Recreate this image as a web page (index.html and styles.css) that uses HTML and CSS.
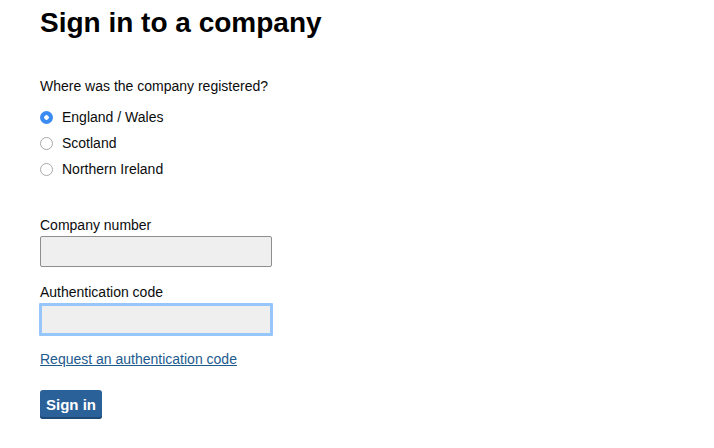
FILE: index.html
```html
<!DOCTYPE html>
<html lang="en">

<head>
    <meta charset="UTF-8">
    <meta name="viewport" content="width=device-width, initial-scale=1.0">
    <title>Sign in to a company</title>
    <link rel="stylesheet" href="styles.css">
</head>

<body>
    <main class="page">
        <h1>Sign in to a company</h1>
        <form class="signin-form">
            <fieldset class="jurisdiction">
                <legend>Where was the company registered?</legend>
                <label class="radio-row">
                    <input type="radio" name="jurisdiction" value="ew" checked>
                    <span>England / Wales</span>
                </label>
                <label class="radio-row">
                    <input type="radio" name="jurisdiction" value="sc">
                    <span>Scotland</span>
                </label>
                <label class="radio-row">
                    <input type="radio" name="jurisdiction" value="ni">
                    <span>Northern Ireland</span>
                </label>
            </fieldset>

            <div class="field field-first">
                <label for="company-number">Company number</label>
                <input class="text-input" type="text" id="company-number">
            </div>

            <div class="field">
                <label for="auth-code">Authentication code</label>
                <input class="text-input focused" type="text" id="auth-code">
            </div>

            <a class="request-link" href="#">Request an authentication code</a>

            <button class="button" type="button">Sign in</button>
        </form>
    </main>
</body>

</html>
```

FILE: styles.css
```css
body {
    margin: 0;
    padding: 0;
    background: #ffffff;
    color: #0b0c0c;
    font-family: 'Liberation Sans', Arial, sans-serif;
}

.page {
    padding: 6px 0 0 40px;
}

h1 {
    font-size: 28px;
    line-height: 34px;
    font-weight: bold;
    color: #000000;
    margin: 0;
}

.signin-form {
    display: flex;
    flex-direction: column;
    align-items: flex-start;
}

.jurisdiction {
    border: 0;
    margin: 36px 0 0;
    padding: 0;
    display: flex;
    flex-direction: column;
}

.jurisdiction legend {
    padding: 0;
    font-size: 14px;
    line-height: 20px;
    margin-bottom: 8px;
}

.radio-row {
    display: flex;
    align-items: center;
    gap: 9px;
    height: 26px;
    font-size: 14px;
}

.radio-row input {
    appearance: none;
    -webkit-appearance: none;
    width: 13px;
    height: 13px;
    margin: 0;
    border: 1px solid #a9a9a9;
    border-radius: 50%;
    background: #ffffff;
    box-sizing: border-box;
}

.radio-row input:checked {
    border: 0;
    background: radial-gradient(circle, #ffffff 0 2px, #3b8cf2 2.5px);
}

.field {
    display: flex;
    flex-direction: column;
    margin-top: 15px;
}

.field-first {
    margin-top: 33px;
}

.field label {
    font-size: 14px;
    line-height: 20px;
    margin-bottom: 1px;
}

.text-input {
    width: 232px;
    height: 31px;
    box-sizing: border-box;
    margin: 0;
    border: 1px solid #8e8e8e;
    border-radius: 2px;
    background: #efefef;
    font-size: 14px;
}

.text-input.focused {
    width: 234px;
    height: 33px;
    margin: 0 0 0 -1px;
    border: 3px solid #97c6fb;
    border-radius: 1px;
}

.request-link {
    margin-top: 13px;
    font-size: 14px;
    line-height: 20px;
    color: #1d5a8e;
    text-decoration: underline;
}

.button {
    margin-top: 21px;
    height: 29px;
    padding: 0 6px;
    border: 0;
    border-radius: 3px;
    background: #2a6199;
    box-shadow: inset 0 -2px 0 #1f4a77;
    color: #ffffff;
    font-family: 'Liberation Sans', Arial, sans-serif;
    font-size: 15px;
    font-weight: bold;
    cursor: pointer;
}
```
